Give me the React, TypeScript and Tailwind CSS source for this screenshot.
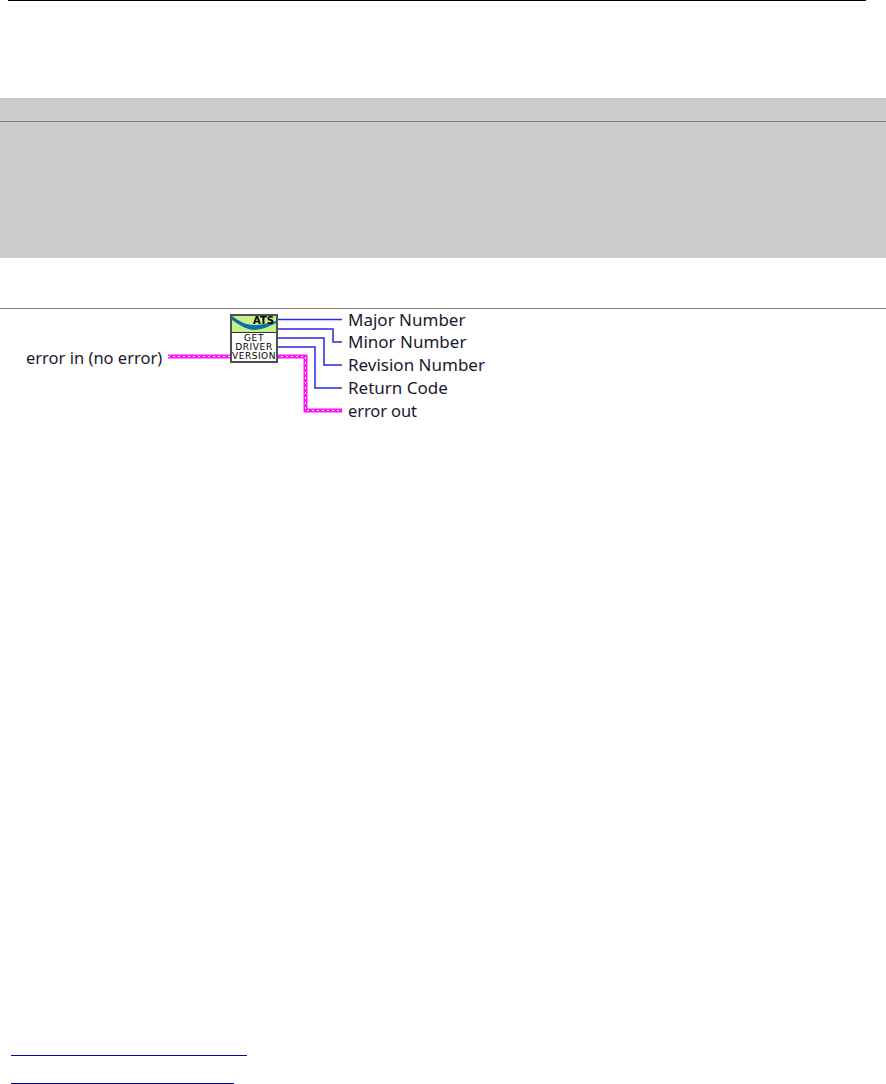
import React from "react";

const labelClass = "absolute text-[17px] leading-[22px] text-[#1a1a2e] whitespace-nowrap";
const errorClass = "absolute text-[16.5px] leading-[22px] text-[#1a1a2e] whitespace-nowrap";
const font = { fontFamily: '"Noto Sans", "Open Sans", sans-serif' };
const pixel = { fontFamily: '"DejaVu Sans", sans-serif' };

function Wires() {
  const blue = "#2a2ae6";
  const pink = "#ff14f5";
  const route = "M168 47.5H232M276 47.5H305.5V101.5H342";
  return (
    <svg className="absolute left-0 top-0" width="886" height="130" fill="none">
      <path d="M278 10.5H342" stroke={blue} strokeWidth="1.5" />
      <path d="M278 20H333V33H342" stroke={blue} strokeWidth="1.5" />
      <path d="M278 29H324V56H342" stroke={blue} strokeWidth="1.5" />
      <path d="M278 38H315V79H342" stroke={blue} strokeWidth="1.5" />
      <path d={route} stroke={pink} strokeWidth="4" />
      <path d={route} stroke="#ffffff" strokeWidth="1" strokeDasharray="2 3" />
    </svg>
  );
}

function Icon() {
  return (
    <div className="absolute left-[230px] top-[5px] w-[48px] h-[49px] border-2 border-[#505050] bg-white flex flex-col overflow-hidden">
      <div className="relative h-[17px] bg-[#c6f08c] border-b border-[#303030] shrink-0">
        <svg className="absolute left-0 top-0" width="44" height="16">
          <path d="M0 0C7 5 13 9 22 9C30 9 38 7 44 5V7C38 10 30 14 22 14C12 13 5 7 0 4Z" fill="#0b6fa8" />
        </svg>
        <span className="absolute right-[2px] top-[-1px] text-[10px] leading-[12px] font-bold text-black" style={pixel}>ATS</span>
      </div>
      <div className="flex-1 flex flex-col items-center justify-center text-[9px] leading-[9px] font-normal text-black" style={pixel}>
        <span className="tracking-[0.6px]">GET</span>
        <span className="tracking-[0.6px]">DRIVER</span>
        <span className="tracking-[0.5px]">VERSION</span>
      </div>
    </div>
  );
}

export default function App() {
  return (
    <div className="w-[886px] h-[1084px] bg-white overflow-hidden flex flex-col" style={font}>
      <div className="h-px ml-2 mr-5 bg-black shrink-0" />
      <div className="h-[97px] shrink-0" />
      <div className="h-[160px] bg-[#cccccc] shrink-0 flex flex-col">
        <div className="h-[23px] border-b border-[#808080] box-content" />
      </div>
      <div className="h-[50px] shrink-0" />
      <div className="h-px bg-[#808080] shrink-0" />
      <div className="relative h-[130px] shrink-0">
        <Wires />
        <Icon />
        <span className={`${errorClass} left-[26px] top-[38px]`}>error in (no error)</span>
        <span className={`${labelClass} left-[348px] top-[0px]`}>Major Number</span>
        <span className={`${labelClass} left-[348px] top-[22px]`}>Minor Number</span>
        <span className={`${labelClass} left-[348px] top-[45px]`}>Revision Number</span>
        <span className={`${labelClass} left-[348px] top-[68px]`}>Return Code</span>
        <span className={`${errorClass} left-[348px] top-[91px] tracking-[-0.1px]`}>error out</span>
      </div>
      <div className="flex-1" />
      <div className="h-px ml-[11px] w-[236px] bg-[#0000c8] shrink-0" />
      <div className="h-[27px] shrink-0" />
      <div className="h-px ml-[11px] w-[223px] bg-[#0000c8] shrink-0" />
    </div>
  );
}
